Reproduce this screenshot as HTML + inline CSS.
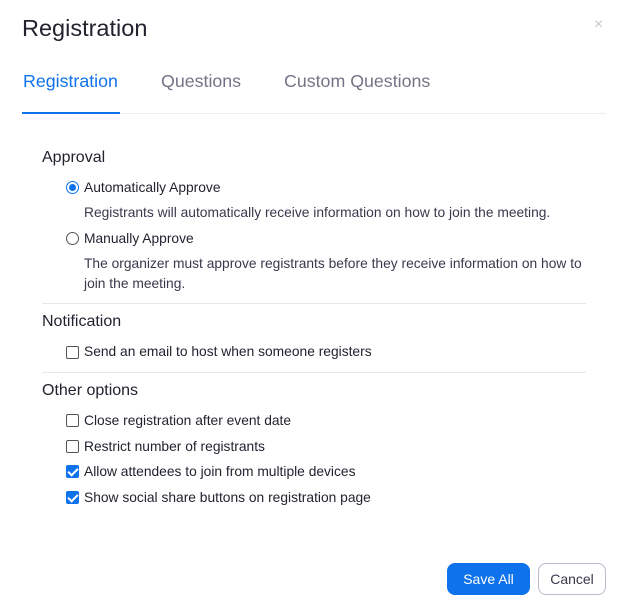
<!DOCTYPE html>
<html><head><style>
*{margin:0;padding:0;box-sizing:border-box}
body{width:630px;height:607px;background:#fff;font-family:"Liberation Sans",sans-serif;color:#23232f;position:relative;overflow:hidden}
.a{position:absolute;white-space:nowrap;line-height:1}
.cb{position:absolute;left:66px;width:13px;height:13px;border:1px solid #555;border-radius:2px;background:#fff}
.cb.on{background:#0e72ed;border-color:#0e72ed}
.cb.on::after{content:"";position:absolute;left:3px;top:0px;width:4px;height:8px;border:solid #fff;border-width:0 2px 2px 0;transform:rotate(45deg)}
.t{font-size:13.8px;left:84px}
.h{font-size:16px;left:42px}
.d{font-size:13.8px;left:84px;color:#39394d}
.hr{position:absolute;left:42px;width:544px;height:1px;background:#e6e6ea}
</style></head><body>
<div class="a" style="left:22px;top:17px;font-size:23.5px">Registration</div>
<div class="a" style="left:594px;top:17px;font-size:16px;color:#c8c8cc">×</div>
<div class="a" style="left:23px;top:73px;font-size:17.8px;color:#0e72ed">Registration</div>
<div class="a" style="left:161px;top:73px;font-size:17.8px;color:#747487">Questions</div>
<div class="a" style="left:284px;top:73px;font-size:17.8px;color:#747487">Custom Questions</div>
<div style="position:absolute;left:22px;top:113px;width:584px;height:1px;background:#ededf0"></div>
<div style="position:absolute;left:22px;top:112px;width:98px;height:2px;background:#0e72ed"></div>

<div class="a h" style="top:150px">Approval</div>
<div style="position:absolute;left:66px;top:181px;width:13px;height:13px;border-radius:50%;border:1px solid #0e72ed;background:#fff"><div style="position:absolute;left:2px;top:2px;width:7px;height:7px;border-radius:50%;background:#0e72ed"></div></div>
<div class="a t" style="top:181px">Automatically Approve</div>
<div class="a d" style="top:206px">Registrants will automatically receive information on how to join the meeting.</div>
<div style="position:absolute;left:66px;top:232px;width:13px;height:13px;border-radius:50%;border:1px solid #555;background:#fff"></div>
<div class="a t" style="top:232px">Manually Approve</div>
<div class="a d" style="top:257px">The organizer must approve registrants before they receive information on how to</div>
<div class="a d" style="top:277px">join the meeting.</div>
<div class="hr" style="top:303px"></div>

<div class="a h" style="top:314px">Notification</div>
<div class="cb" style="top:346px"></div>
<div class="a t" style="top:345px">Send an email to host when someone registers</div>
<div class="hr" style="top:372px"></div>

<div class="a h" style="top:383px">Other options</div>
<div class="cb" style="top:414px"></div>
<div class="a t" style="top:414px">Close registration after event date</div>
<div class="cb" style="top:440px"></div>
<div class="a t" style="top:440px">Restrict number of registrants</div>
<div class="cb on" style="top:465px"></div>
<div class="a t" style="top:465px">Allow attendees to join from multiple devices</div>
<div class="cb on" style="top:491px"></div>
<div class="a t" style="top:491px">Show social share buttons on registration page</div>

<div style="position:absolute;left:447px;top:563px;width:83px;height:32px;border-radius:8px;background:#0e72ed;color:#fff;font-size:14px;text-align:center;line-height:32px">Save All</div>
<div style="position:absolute;left:538px;top:563px;width:68px;height:32px;border-radius:8px;border:1px solid #babacc;color:#39394d;font-size:14px;text-align:center;line-height:30px">Cancel</div>
</body></html>
